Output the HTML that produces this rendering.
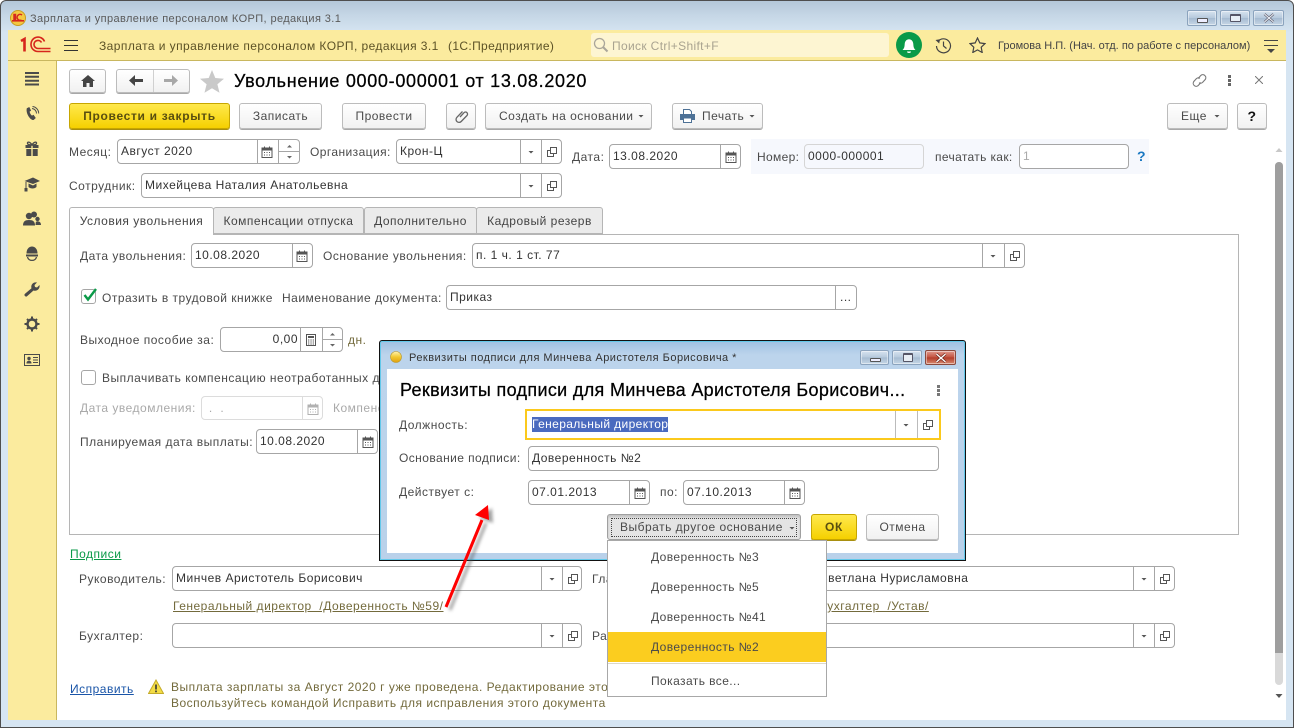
<!DOCTYPE html>
<html lang="ru"><head><meta charset="utf-8"><title>Увольнение</title>
<style>
html,body{margin:0;padding:0;width:1294px;height:728px;overflow:hidden;background:#fff}
body{position:relative;font:12px/14px "Liberation Sans",sans-serif;color:#4a4a4a;letter-spacing:.5px}
div,span,svg,i{position:absolute;box-sizing:border-box}
.t{white-space:nowrap}
.f{height:25px;background:#fff;border:1px solid #a6a6a6;border-radius:4px;line-height:23px;padding-left:3px;white-space:nowrap;color:#333}
.s{top:0;bottom:0;width:1px;background:#a6a6a6}
.b{height:26px;background:linear-gradient(#fff,#f1f1f1);border:1px solid #bcbcbc;border-radius:3px;box-shadow:0 1px 0 #a8a8a8;text-align:center;line-height:24px;white-space:nowrap;color:#4a4a4a}
.y{background:linear-gradient(#ffe94d,#f5d000);border-color:#c7a600;box-shadow:0 1px 0 #a88f10;font-weight:bold;color:#5a4f10;letter-spacing:.68px}
.ic{width:12px;height:12px;overflow:visible}
.tab{top:207px;height:27px;background:#ebebeb;border:1px solid #b5b5b5;border-radius:3px 3px 0 0;line-height:26px;text-align:center;white-space:nowrap;color:#444}
.sb{left:24px;width:16px;height:16px;overflow:visible;fill:#4a4a4a}
.lnk{text-decoration:underline;white-space:nowrap}
.wb{height:16px;border:1px solid #8ba3bd;border-radius:2px;background:linear-gradient(#d7e3ef 0,#b6c9dc 50%,#a5bbd1 51%,#c6d6e6 100%);box-shadow:inset 0 0 0 1px rgba(255,255,255,.45)}
.mi{left:43px;color:#4a4a4a;white-space:nowrap;letter-spacing:.42px}
</style></head><body>
<svg width="0" height="0" style="position:absolute"><defs>
<symbol id="cal" viewBox="0 0 12 12"><path d="M1 2h10v9.500H1z" fill="none" stroke="#555"/><path d="M1 2h10v2.500H1zM3 .5h1v2H3zM8 .5h1v2H8z" fill="#555"/><path d="M3 6h1v1H3zM5.500 6h1v1h-1zM8 6h1v1H8zM3 8.500h1v1H3zM5.500 8.500h1v1h-1zM8 8.500h1v1H8z" fill="#555"/></symbol>
<symbol id="dd" viewBox="0 0 12 12"><path d="M3.500 5h5L6 7.500z" fill="#555"/></symbol>
<symbol id="cp" viewBox="0 0 12 12"><path d="M4.500 1.500h6v6h-6z" fill="none" stroke="#555"/><path d="M4.500 4.500h-3v6h6v-3" fill="none" stroke="#555"/></symbol>
<symbol id="calc" viewBox="0 0 12 12"><path d="M1.500 .5h9v11h-9z" fill="none" stroke="#555"/><path d="M3 2h6v2H3zM3 5.500h1.300v1H3zM5.400 5.500h1.300v1H5.400zM7.700 5.500H9v1H7.700zM3 7.500h1.300v1H3zM5.400 7.500h1.300v1H5.400zM7.700 7.500H9v1H7.700zM3 9.500h1.300v1H3zM5.400 9.500h1.300v1H5.400zM7.700 9.500H9v1H7.700z" fill="#555"/></symbol>
</defs></svg>

<!-- window frame -->
<div style="left:0;top:0;width:1294px;height:728px;border:1px solid #4e4e4e;border-radius:6px 6px 0 0;background:linear-gradient(#b4c7d9 0,#c5d6e5 14px,#d6e5f2 32px,#d6e5f2 100%)"></div>
<svg style="left:10px;top:10px;width:16px;height:16px" viewBox="0 0 16 16"><circle cx="8" cy="8" r="7.500" fill="#f4c842" stroke="#c89b20"/><path d="M2 10h12v1.600H2z" fill="#d5281e"/><path d="M4 4.500h1.500v5H4zM12 5a3 3 0 1 0-.5 5" fill="none" stroke="#d5281e" stroke-width="1.500"/></svg>
<span class="t" style="left:30px;top:12px;color:#5a5a5a;font-size:11px;letter-spacing:.39px">Зарплата и управление персоналом КОРП, редакция 3.1</span>
<div class="wb" style="left:1187px;top:10px;width:30px"><div style="left:9px;top:7px;width:11px;height:5px;border:1px solid #555;background:#eef;border-radius:1px"></div></div>
<div class="wb" style="left:1220px;top:10px;width:30px"><div style="left:9px;top:3px;width:11px;height:8px;border:1px solid #556;border-top-width:2px;border-radius:1px;background:#e8eef5"></div></div>
<div class="wb" style="left:1253px;top:10px;width:31px"><svg style="left:9px;top:2px;width:12px;height:10px" viewBox="0 0 12 10"><path d="M1.500 1l9 8M10.500 1l-9 8" stroke="#667" stroke-width="2.500" fill="none"/><path d="M1.500 1l9 8M10.500 1l-9 8" stroke="#eef3f8" stroke-width="1" fill="none"/></svg></div>

<!-- content bg -->
<div style="left:8px;top:30px;width:1278px;height:690px;background:#fff"></div>
<!-- top bar -->
<div style="left:8px;top:30px;width:1278px;height:31px;background:#fbeb9e;border-bottom:1px solid #c9b75f"></div>
<svg style="left:20px;top:36px;width:31px;height:17px" viewBox="0 0 31 17"><path d="M1 5l3.500-2v12.500" fill="none" stroke="#d6261c" stroke-width="2.600"/><path d="M24.500 5.500A7 7 0 0 0 11 8.500a7 7 0 0 0 7 7h12.500" fill="none" stroke="#d6261c" stroke-width="1.600"/><path d="M21.500 6.500A4 4 0 0 0 14 8.500a4 4 0 0 0 4 4h12.500" fill="none" stroke="#d6261c" stroke-width="1.600"/></svg>
<div style="left:64px;top:40px;width:14px;height:1px;background:#333"></div><div style="left:64px;top:45px;width:14px;height:1px;background:#333"></div><div style="left:64px;top:50px;width:14px;height:1px;background:#333"></div>
<span class="t" style="left:99px;top:39px;color:#5c5226;letter-spacing:.43px">Зарплата и управление персоналом КОРП, редакция 3.1</span>
<span class="t" style="left:448px;top:39px;color:#5c5226;letter-spacing:.35px">(1С:Предприятие)</span>
<div style="left:591px;top:33px;width:298px;height:24px;background:#fdf5d2;border-radius:3px"></div>
<svg style="left:593px;top:37px;width:16px;height:16px" viewBox="0 0 16 16"><circle cx="6.500" cy="6.500" r="5" fill="none" stroke="#aaa69a" stroke-width="1.300"/><path d="M10 10l4.500 4.500" stroke="#aaa69a" stroke-width="2"/></svg>
<span class="t" style="left:612px;top:39px;color:#a9a390;letter-spacing:.35px">Поиск Ctrl+Shift+F</span>
<svg style="left:896px;top:32px;width:26px;height:26px" viewBox="0 0 26 26"><circle cx="13" cy="13" r="13" fill="#0a9a48"/><path d="M6.500 18c1.500-1.500 2-2.500 2.200-6 .2-3 2-4.800 4.300-4.800s4.100 1.800 4.300 4.800c.2 3.500.7 4.500 2.200 6z" fill="#fff"/><path d="M11 19.500h4a2 1.500 0 0 1-4 0z" fill="#fff"/></svg>
<svg style="left:935px;top:37px;width:17px;height:17px" viewBox="0 0 17 17"><path d="M3 4.500A7 7 0 1 1 1.500 9" fill="none" stroke="#444" stroke-width="1.200"/><path d="M.5 3l4.500-.8L4.200 6.500z" fill="#444"/><path d="M8.500 4.500V9l3 2.500" fill="none" stroke="#444" stroke-width="1.200"/></svg>
<svg style="left:969px;top:37px;width:17px;height:16px" viewBox="0 0 17 16"><path d="M8.500 1l2.300 4.900 5.200.7-3.800 3.600 1 5.300-4.700-2.600-4.700 2.600 1-5.300L1 6.600l5.200-.7z" fill="none" stroke="#444" stroke-width="1.200"/></svg>
<span class="t" style="left:998px;top:39px;color:#444;font-size:11px;letter-spacing:.01px">Громова Н.П. (Нач. отд. по работе с персоналом)</span>
<div style="left:1264px;top:40px;width:14px;height:1px;background:#444"></div><div style="left:1264px;top:45px;width:14px;height:1px;background:#444"></div>
<svg style="left:1267px;top:49px;width:8px;height:5px" viewBox="0 0 8 5"><path d="M0 0h8L4 4z" fill="#444"/></svg>

<!-- sidebar -->
<div style="left:8px;top:61px;width:49px;height:659px;background:#fbeb9e;border-right:1px solid #c9b75f"></div>
<svg class="sb" style="top:72px;left:25px;width:14px;height:14px" viewBox="0 0 14 14"><path d="M0 0h14v2H0zM0 3.800h14v2H0zM0 7.700h14v2H0zM0 11.500h14v2H0z"/></svg>
<svg class="sb" style="top:106px" viewBox="0 0 16 16"><path d="M2.800 2.200L5.300 1l1.800 3.600-1.500 1c.2 1.500 1.200 3.200 2.400 4l1.500-.8 2.300 3.200-2.200 2C6.500 14.500 1.500 7.500 2.800 2.200z"/><path d="M8 2.500a5 5 0 0 1 4.500 5M8.500.5a7 7 0 0 1 6.200 7" fill="none" stroke="#4a4a4a"/></svg>
<svg class="sb" style="top:141px" viewBox="0 0 16 16"><path d="M1.500 4h5.800v3H1.500zM8.700 4h5.800v3H8.700zM2.300 8h5v7h-5zM8.700 8h5v7h-5z"/><path d="M8 4C6 .5 3 .5 3.500 2.500 4 4 6 4 8 4c2 0 4 0 4.500-1.500C13 .5 10 .5 8 4z" fill="none" stroke="#4a4a4a" stroke-width="1.300"/></svg>
<svg class="sb" style="top:176px" viewBox="0 0 16 16"><path d="M.5 5L9 1.500 16 5 9 8z"/><path d="M4.500 7.500l4.500 2 3.500-2V11c-2 2-6 2-8 0z"/><path d="M2 6v6" stroke="#4a4a4a" fill="none"/><path d="M.5 12h3v3.500h-3z"/></svg>
<svg class="sb" style="top:211px;left:23px;width:18px" viewBox="0 0 18 16"><circle cx="11" cy="3.500" r="3"/><circle cx="6" cy="5" r="3.200"/><path d="M0 14.500c0-4 2-5.500 6-5.500s6 1.500 6 5.500z"/><circle cx="14.500" cy="8" r="2.200"/><path d="M12.500 14c.3-2 0-2.800 1-3.500 2.500-.5 4.500.5 4.500 3.500z"/></svg>
<svg class="sb" style="top:246px" viewBox="0 0 16 16"><path d="M2.500 7.500C2.500 3 5 .5 8 .5s5.500 2.500 5.500 7z"/><path d="M2 8.500h12v2H2z"/><path d="M3.500 11c1 4.500 8 4.500 9 0" fill="none" stroke="#4a4a4a" stroke-width="1.300"/></svg>
<svg class="sb" style="top:281px" viewBox="0 0 16 16"><path d="M1 15c-.8-.8-.8-1.500 0-2.300l6.500-5.500C6.500 4 9 .5 13 1.500L10.500 4l.5 2 2 .5L15.500 4c.8 3.500-2.500 6.800-6 5.500L3.300 15c-.8.800-1.500.8-2.300 0z"/></svg>
<svg class="sb" style="top:316px" viewBox="0 0 16 16"><circle cx="8" cy="8" r="4.500" fill="none" stroke="#4a4a4a" stroke-width="2.400"/><path d="M7 .5h2v3H7zM7 12.500h2v3H7zM.5 7h3v2h-3zM12.500 7h3v2h-3zM2.300 3.700l1.400-1.400 2 2-1.400 1.400zM10.300 11.700l1.400-1.400 2 2-1.400 1.400zM2.300 12.300l2-2 1.400 1.400-2 2zM10.300 4.300l2-2 1.400 1.400-2 2z"/></svg>
<svg class="sb" style="top:352px" viewBox="0 0 16 14"><path d="M.5 1.500h15v11H.5z" fill="none" stroke="#4a4a4a"/><circle cx="5" cy="5.500" r="1.700"/><path d="M2.500 10.500c0-2 1-2.700 2.500-2.700s2.500.7 2.500 2.700zM9 4h5v1H9zM9 6.500h5v1H9zM9 9h5v1H9z"/></svg>

<!-- form header -->
<div class="b" style="left:69px;top:69px;width:37px;height:24px"><svg style="left:11px;top:5px;width:14px;height:12px" viewBox="0 0 14 12"><path d="M7 0L0 6h2v6h3.500V8h3v4H12V6h2z" fill="#444"/></svg></div>
<div class="b" style="left:116px;top:69px;width:74px;height:24px"><i class="s" style="left:36px;background:#d0d0d0"></i><svg style="left:12px;top:5px;width:14px;height:12px" viewBox="0 0 14 12"><path d="M6 0v4h8v3H6v4L0 5.500z" fill="#444"/></svg><svg style="left:47px;top:5px;width:14px;height:12px" viewBox="0 0 14 12"><path d="M8 0v4H0v3h8v4l6-5.500z" fill="#a8a8a8"/></svg></div>
<svg style="left:200px;top:70px;width:24px;height:23px" viewBox="0 0 24 23"><path d="M12 0l3.300 8 8.700.7-6.600 5.600 2.100 8.500L12 18.300 4.500 22.800l2.100-8.500L0 8.700 8.700 8z" fill="#c9c9c9"/></svg>
<span class="t" style="left:234px;top:71px;font-size:18px;line-height:21px;color:#000;letter-spacing:.69px;-webkit-text-stroke:.25px #000">Увольнение 0000-000001 от 13.08.2020</span>
<svg style="left:1191px;top:72px;width:17px;height:17px" viewBox="0 0 17 17"><path d="M7 6.500l3-3.200a3 3 0 0 1 4.200 4.200L11.500 10.500a3 3 0 0 1-3.500.2M10 10.500l-3 3.200a3 3 0 0 1-4.200-4.200L5.500 6.500a3 3 0 0 1 3.500-.2" fill="none" stroke="#777" stroke-width="1.100"/></svg>
<div style="left:1228px;top:75px;width:3px;height:3px;background:#666"></div><div style="left:1228px;top:79px;width:3px;height:3px;background:#666"></div><div style="left:1228px;top:83px;width:3px;height:3px;background:#666"></div>
<svg style="left:1255px;top:76px;width:8px;height:8px" viewBox="0 0 8 8"><path d="M0 0l8 8M8 0L0 8" stroke="#777"/></svg>

<!-- command bar -->
<div class="b y" style="left:69px;top:103px;width:161px">Провести и закрыть</div>
<div class="b" style="left:239px;top:103px;width:83px">Записать</div>
<div class="b" style="left:342px;top:103px;width:84px">Провести</div>
<div class="b" style="left:446px;top:103px;width:30px"><svg style="left:7px;top:5px;width:15px;height:15px" viewBox="0 0 15 15"><path d="M5 7.500l4-4.300a2 2 0 0 1 3 2.800l-5.800 6a3 3 0 0 1-4.300-4.200L7.500 2" fill="none" stroke="#666" stroke-width="1.300" transform="translate(1 .5)"/></svg></div>
<div class="b" style="left:485px;top:103px;width:167px;text-align:left;padding-left:13px">Создать на основании<svg class="ic" style="left:149px;top:6px"><use href="#dd"/></svg></div>
<div class="b" style="left:672px;top:103px;width:91px;text-align:left;padding-left:29px">Печать<svg style="left:7px;top:5px;width:15px;height:14px" viewBox="0 0 15 14"><path d="M3.500.5h6l2 2v3h-8z" fill="#fff" stroke="#4d7196"/><path d="M0 5h15v6H0z" fill="#4d7196"/><path d="M3.500 9h8v4.500h-8z" fill="#fff" stroke="#4d7196"/></svg><svg class="ic" style="left:73px;top:6px"><use href="#dd"/></svg></div>
<div class="b" style="left:1167px;top:103px;width:61px;text-align:left;padding-left:13px">Еще<svg class="ic" style="left:43px;top:6px"><use href="#dd"/></svg></div>
<div class="b" style="left:1237px;top:103px;width:30px;color:#111;font-weight:bold;font-size:14px">?</div>

<!-- row 1 -->
<span class="t" style="left:69px;top:145px">Месяц:</span>
<div class="f" style="left:117px;top:139px;width:183px">Август 2020<i class="s" style="left:139px"></i><i class="s" style="left:160px"></i><svg class="ic" style="left:143px;top:6px"><use href="#cal"/></svg><svg style="left:168px;top:4px;width:7px;height:5px" viewBox="0 0 7 5"><path d="M3.500 1L6 3.500H1z" fill="#666"/></svg><div style="left:161px;top:11px;width:20px;height:1px;background:#a6a6a6"></div><svg style="left:168px;top:15px;width:7px;height:5px" viewBox="0 0 7 5"><path d="M3.500 3.500L6 1H1z" fill="#666"/></svg></div>
<span class="t" style="left:310px;top:145px;letter-spacing:.42px">Организация:</span>
<div class="f" style="left:396px;top:139px;width:166px">Крон-Ц<i class="s" style="left:123px"></i><i class="s" style="left:144px"></i><svg class="ic" style="left:128px;top:6px"><use href="#dd"/></svg><svg class="ic" style="left:149px;top:6px"><use href="#cp"/></svg></div>
<span class="t" style="left:572px;top:150px">Дата:</span>
<div class="f" style="left:609px;top:144px;width:132px">13.08.2020<i class="s" style="left:110px"></i><svg class="ic" style="left:115px;top:6px"><use href="#cal"/></svg></div>
<div style="left:751px;top:139px;width:398px;height:35px;background:#f6f8fd"></div>
<span class="t" style="left:757px;top:150px;letter-spacing:.35px">Номер:</span>
<div class="f" style="left:804px;top:144px;width:120px;background:#f6f8fd;border-color:#d5d5d5">0000-000001</div>
<span class="t" style="left:935px;top:150px;letter-spacing:.35px">печатать как:</span>
<div class="f" style="left:1019px;top:144px;width:110px;color:#aaa">1</div>
<span class="t" style="left:1137px;top:149px;color:#1a78c2;font-weight:bold;font-size:14px">?</span>

<span class="t" style="left:69px;top:179px">Сотрудник:</span>
<div class="f" style="left:141px;top:173px;width:421px">Михейцева Наталия Анатольевна<i class="s" style="left:378px"></i><i class="s" style="left:399px"></i><svg class="ic" style="left:383px;top:6px"><use href="#dd"/></svg><svg class="ic" style="left:404px;top:6px"><use href="#cp"/></svg></div>

<!-- tabs -->
<div style="left:69px;top:234px;width:1170px;height:301px;border:1px solid #b5b5b5;background:#fff"></div>
<div class="tab" style="left:213px;width:151px">Компенсации отпуска</div>
<div class="tab" style="left:364px;width:113px">Дополнительно</div>
<div class="tab" style="left:476px;width:127px">Кадровый резерв</div>
<div class="tab" style="left:69px;width:145px;height:28px;background:#fff;border-bottom:0">Условия увольнения</div>

<span class="t" style="left:80px;top:249px">Дата увольнения:</span>
<div class="f" style="left:191px;top:243px;width:122px">10.08.2020<i class="s" style="left:100px"></i><svg class="ic" style="left:104px;top:6px"><use href="#cal"/></svg></div>
<span class="t" style="left:323px;top:249px">Основание увольнения:</span>
<div class="f" style="left:472px;top:243px;width:553px">п. 1 ч. 1 ст. 77<i class="s" style="left:509px"></i><i class="s" style="left:531px"></i><svg class="ic" style="left:514px;top:6px"><use href="#dd"/></svg><svg class="ic" style="left:536px;top:6px"><use href="#cp"/></svg></div>

<div style="left:81px;top:289px;width:15px;height:15px;border:1px solid #a6a6a6;border-radius:3px;background:#fff"></div>
<svg style="left:83px;top:288px;width:15px;height:14px" viewBox="0 0 15 14"><path d="M1.500 7l3.500 4.500L13 1" fill="none" stroke="#0a9a48" stroke-width="2.400"/></svg>
<span class="t" style="left:102px;top:291px">Отразить в трудовой книжке</span>
<span class="t" style="left:282px;top:291px">Наименование документа:</span>
<div class="f" style="left:446px;top:285px;width:411px">Приказ<i class="s" style="left:388px"></i><span class="t" style="left:393px;top:0;line-height:23px">...</span></div>

<span class="t" style="left:80px;top:333px">Выходное пособие за:</span>
<div class="f" style="left:220px;top:327px;width:123px;text-align:right;padding-right:44px">0,00<i class="s" style="left:79px"></i><i class="s" style="left:101px"></i><svg class="ic" style="left:84px;top:6px"><use href="#calc"/></svg><svg style="left:108px;top:4px;width:7px;height:5px" viewBox="0 0 7 5"><path d="M3.500 1L6 3.500H1z" fill="#666"/></svg><div style="left:102px;top:11px;width:20px;height:1px;background:#a6a6a6"></div><svg style="left:108px;top:15px;width:7px;height:5px" viewBox="0 0 7 5"><path d="M3.500 3.500L6 1H1z" fill="#666"/></svg></div>
<span class="t" style="left:348px;top:333px;color:#736a3c">дн.</span>

<div style="left:81px;top:370px;width:15px;height:15px;border:1px solid #a6a6a6;border-radius:3px;background:#fff"></div>
<span class="t" style="left:102px;top:371px">Выплачивать компенсацию неотработанных дней</span>
<span class="t" style="left:80px;top:401px;color:#a9a9a9">Дата уведомления:</span>
<div class="f" style="left:201px;top:396px;width:122px;border-color:#dcdcdc;color:#aaa;height:24px">&nbsp;. &nbsp;.<i class="s" style="left:100px;background:#dcdcdc"></i><svg class="ic" style="left:105px;top:6px;opacity:.45"><use href="#cal"/></svg></div>
<span class="t" style="left:333px;top:401px;color:#a9a9a9">Компенсация</span>
<span class="t" style="left:80px;top:435px">Планируемая дата выплаты:</span>
<div class="f" style="left:256px;top:429px;width:122px">10.08.2020<i class="s" style="left:100px"></i><svg class="ic" style="left:105px;top:6px"><use href="#cal"/></svg></div>

<!-- signatures -->
<span class="t lnk" style="left:70px;top:547px;color:#0a9a48">Подписи</span>
<span class="t" style="left:79px;top:572px">Руководитель:</span>
<div class="f" style="left:172px;top:566px;width:410px">Минчев Аристотель Борисович<i class="s" style="left:368px"></i><i class="s" style="left:389px"></i><svg class="ic" style="left:373px;top:6px"><use href="#dd"/></svg><svg class="ic" style="left:394px;top:6px"><use href="#cp"/></svg></div>
<span class="t lnk" style="left:173px;top:599px;color:#736a3c">Генеральный директор &nbsp;/Доверенность №59/</span>
<span class="t" style="left:79px;top:629px">Бухгалтер:</span>
<div class="f" style="left:172px;top:623px;width:410px"><i class="s" style="left:368px"></i><i class="s" style="left:389px"></i><svg class="ic" style="left:373px;top:6px"><use href="#dd"/></svg><svg class="ic" style="left:394px;top:6px"><use href="#cp"/></svg></div>
<span class="t" style="left:592px;top:572px">Главный бухгалтер:</span>
<div class="f" style="left:680px;top:566px;width:495px"><span class="t" style="left:138px;top:0;line-height:23px">Светлана Нурисламовна</span><i class="s" style="left:452px"></i><i class="s" style="left:473px"></i><svg class="ic" style="left:457px;top:6px"><use href="#dd"/></svg><svg class="ic" style="left:478px;top:6px"><use href="#cp"/></svg></div>
<span class="t lnk" style="left:765px;top:599px;color:#736a3c">Главный бухгалтер &nbsp;/Устав/</span>
<span class="t" style="left:592px;top:629px">Расчетчик:</span>
<div class="f" style="left:680px;top:623px;width:495px"><i class="s" style="left:452px"></i><i class="s" style="left:473px"></i><svg class="ic" style="left:457px;top:6px"><use href="#dd"/></svg><svg class="ic" style="left:478px;top:6px"><use href="#cp"/></svg></div>

<span class="t lnk" style="left:70px;top:682px;color:#1a55a8">Исправить</span>
<svg style="left:148px;top:679px;width:16px;height:16px" viewBox="0 0 16 16"><path d="M8 1l7.500 13.500H.5z" fill="#f3dc45" stroke="#c4ab2a"/><path d="M7.200 5.500h1.600v5H7.200zM7.200 11.500h1.600v1.700H7.200z" fill="#333"/></svg>
<span class="t" style="left:171px;top:680px;color:#736a3c">Выплата зарплаты за Август 2020 г уже проведена. Редактирование этого</span>
<span class="t" style="left:171px;top:696px;color:#736a3c">Воспользуйтесь командой Исправить для исправления этого документа</span>

<!-- scrollbar -->
<svg style="left:1275px;top:147px;width:8px;height:6px" viewBox="0 0 8 6"><path d="M4 1l3.500 4H.5z" fill="#c8c8c8"/></svg>
<div style="left:1275px;top:162px;width:8px;height:523px;background:#d9d9d9;border-radius:4px"></div>
<div style="left:1275px;top:162px;width:8px;height:491px;background:#9e9e9e;border-radius:4px 4px 0 0"></div>
<svg style="left:1275px;top:693px;width:8px;height:6px" viewBox="0 0 8 6"><path d="M4 5L.5 1h7z" fill="#555"/></svg>

<!-- dialog -->
<div style="left:379px;top:340px;width:587px;height:221px;border:1px solid #111;border-radius:3px 3px 0 0;background:linear-gradient(#9fc0e2 0,#bcd4ec 14px,#b9d1ea 100%);box-shadow:inset 0 0 0 1px #62c8ea"></div>
<svg style="left:390px;top:351px;width:12px;height:12px" viewBox="0 0 12 12"><defs><linearGradient id="g" x1="0" y1="0" x2="0" y2="1"><stop offset="0" stop-color="#fff3b0"/><stop offset=".5" stop-color="#f2c830"/><stop offset="1" stop-color="#e0a010"/></linearGradient></defs><circle cx="6" cy="6" r="5.500" fill="url(#g)" stroke="#b99a30" stroke-width=".6"/></svg>
<span class="t" style="left:409px;top:351px;font-size:11px;color:#333;letter-spacing:.48px">Реквизиты подписи для Минчева Аристотеля Борисовича *</span>
<div class="wb" style="left:860px;top:350px;width:29px;height:15px"><div style="left:9px;top:7px;width:11px;height:4px;border:1px solid #555;background:#eef;border-radius:1px"></div></div>
<div class="wb" style="left:892px;top:350px;width:30px;height:15px"><div style="left:10px;top:2px;width:10px;height:9px;border:1px solid #556;border-top-width:2px;border-radius:1px;background:#e8eef5"></div></div>
<div class="wb" style="left:925px;top:350px;width:31px;height:15px;background:linear-gradient(#e09a8e,#c2503e 50%,#b23a28 51%,#d88a70);border-color:#8a4a3e"><svg style="left:9px;top:2px;width:12px;height:10px" viewBox="0 0 12 10"><path d="M1.500 1l9 8M10.500 1l-9 8" stroke="#6d2a20" stroke-width="2.800" fill="none"/><path d="M1.500 1l9 8M10.500 1l-9 8" stroke="#fff" stroke-width="1.300" fill="none"/></svg></div>
<div style="left:387px;top:369px;width:571px;height:184px;background:#fff"></div>
<span class="t" style="left:400px;top:380px;font-size:18px;line-height:21px;color:#000;letter-spacing:.33px;-webkit-text-stroke:.25px #000">Реквизиты подписи для Минчева Аристотеля Борисович...</span>
<div style="left:937px;top:385px;width:3px;height:3px;background:#777"></div><div style="left:937px;top:389px;width:3px;height:3px;background:#777"></div><div style="left:937px;top:393px;width:3px;height:3px;background:#777"></div>

<span class="t" style="left:399px;top:418px">Должность:</span>
<div class="f" style="left:525px;top:409px;width:416px;height:31px;border:2px solid #fbc91c;border-radius:0"><i class="s" style="left:368px;background:#bbb"></i><i class="s" style="left:390px;background:#bbb"></i><svg class="ic" style="left:373px;top:8px"><use href="#dd"/></svg><svg class="ic" style="left:395px;top:8px"><use href="#cp"/></svg><span class="t" style="left:5px;top:6px;height:15px;line-height:15px;background:#4a6abf;color:#fff;letter-spacing:.38px">Генеральный директор</span></div>
<span class="t" style="left:399px;top:451px;letter-spacing:.42px">Основание подписи:</span>
<div class="f" style="left:528px;top:446px;width:411px">Доверенность №2</div>
<span class="t" style="left:399px;top:485px">Действует с:</span>
<div class="f" style="left:528px;top:480px;width:122px">07.01.2013<i class="s" style="left:100px"></i><svg class="ic" style="left:105px;top:6px"><use href="#cal"/></svg></div>
<span class="t" style="left:660px;top:485px">по:</span>
<div class="f" style="left:683px;top:480px;width:122px">07.10.2013<i class="s" style="left:100px"></i><svg class="ic" style="left:105px;top:6px"><use href="#cal"/></svg></div>

<div class="b" style="left:607px;top:514px;width:194px;background:#e4e4e4;border-color:#a0a0a0;box-shadow:inset 0 2px 2px #c0c0c0;text-align:left;padding-left:12px">Выбрать другое основание<div style="left:3px;top:3px;right:3px;bottom:2px;border:1px dotted #444"></div><svg class="ic" style="left:178px;top:7px"><use href="#dd"/></svg></div>
<div class="b y" style="left:811px;top:514px;width:46px">ОК</div>
<div class="b" style="left:866px;top:514px;width:73px">Отмена</div>

<!-- arrow -->
<svg style="left:430px;top:495px;width:80px;height:125px" viewBox="0 0 80 125"><defs><filter id="bl" x="-50%" y="-50%" width="200%" height="200%"><feGaussianBlur stdDeviation="1.500"/></filter></defs><g filter="url(#bl)" opacity=".55"><path d="M20 115L56 28" stroke="#555" stroke-width="3" fill="none"/><path d="M62 13L49 23l14 5z" fill="#555"/></g><path d="M16 112L52 25" stroke="#f00" stroke-width="3" fill="none"/><path d="M58 10L45 20l14 5z" fill="#f00"/></svg>

<!-- dropdown -->
<div style="left:607px;top:540px;width:220px;height:157px;background:#fff;border:1px solid #a8a8a8">
<span class="mi" style="top:9px">Доверенность №3</span>
<span class="mi" style="top:39px">Доверенность №5</span>
<span class="mi" style="top:69px">Доверенность №41</span>
<div style="left:0;top:91px;width:218px;height:30px;background:#fbcd1f"></div>
<span class="mi" style="top:99px">Доверенность №2</span>
<div style="left:0;top:122px;width:218px;height:1px;background:#dcd8c8"></div>
<span class="mi" style="top:133px">Показать все...</span>
</div>
</body></html>
